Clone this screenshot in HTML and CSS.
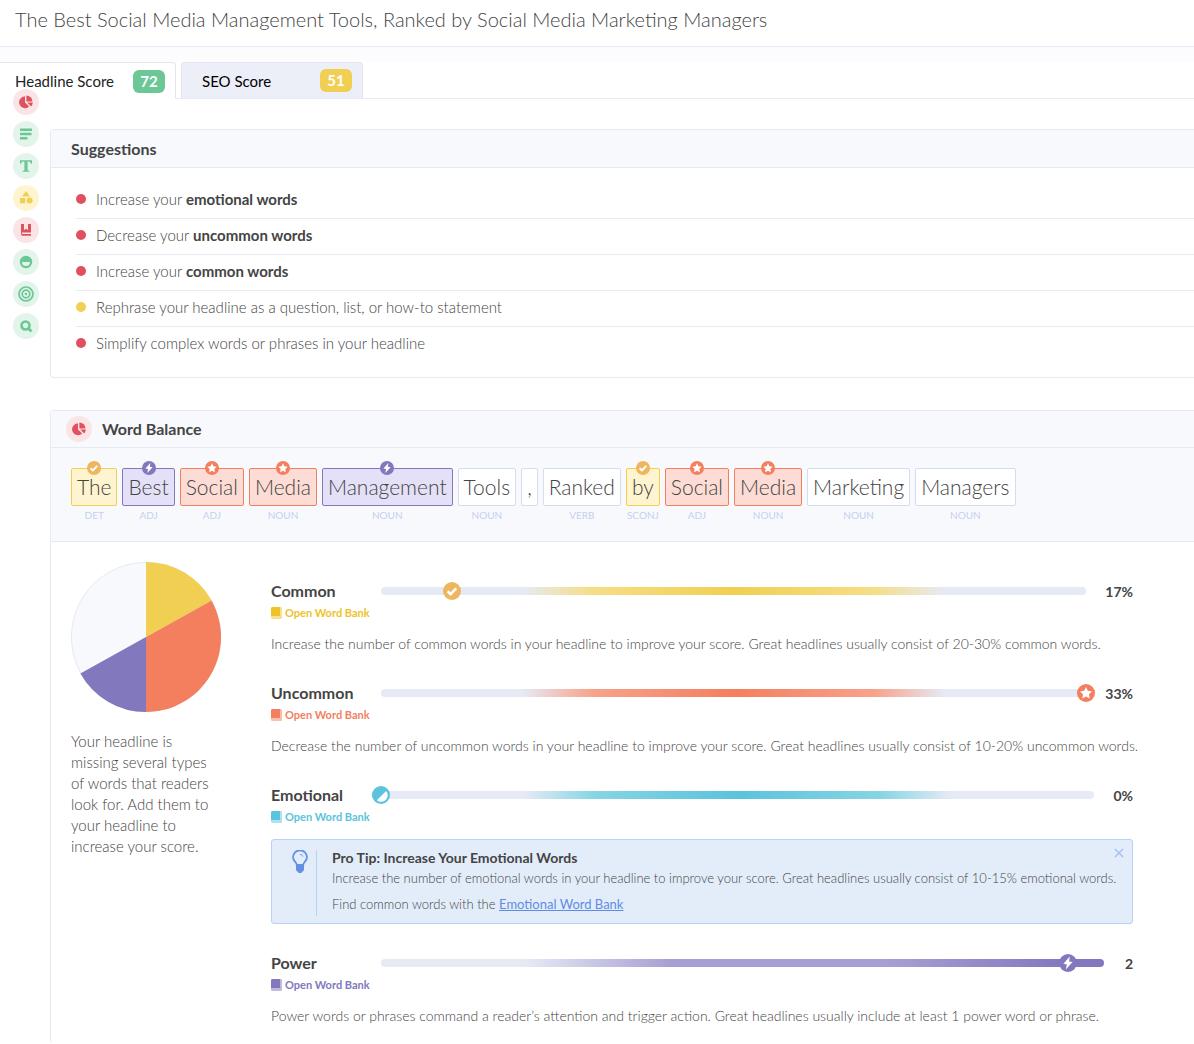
FILE: index.html
```
<!DOCTYPE html>
<html lang="en">
<head>
  <meta charset="UTF-8" />
  <meta name="viewport" content="width=device-width, initial-scale=1.0"/>
  <title>Headline Score</title>
  <link rel="stylesheet" href="styles.css">
</head>
<body>
  <!-- shared icons -->
  <svg class="sprite" aria-hidden="true">
    <symbol id="i-pie" viewBox="0 0 14 14">
      <path d="M6 1.2a6 6 0 1 0 4.2 10.4L6 7.4z"/>
      <path d="M7.4.4v6h6A6 6 0 0 0 7.4.4z"/>
      <path d="M8.2 7.6h5.6a6 6 0 0 1-1.7 3.8z"/>
    </symbol>
    <symbol id="i-check" viewBox="0 0 18 18">
      <circle cx="9" cy="9" r="9"/>
      <path d="M4.6 9.2l3 2.9 5.6-5.8" fill="none" stroke="#fff" stroke-width="2.6"/>
    </symbol>
    <symbol id="i-bolt" viewBox="0 0 18 18">
      <circle cx="9" cy="9" r="9"/>
      <path d="M10.8 2.6L4.4 9.8l3.4.6-1 5L13.6 8l-3.5-.5z" fill="#fff"/>
    </symbol>
    <symbol id="i-star" viewBox="0 0 18 18">
      <circle cx="9" cy="9" r="9"/>
      <path d="M9 3l1.8 3.8 4.2.6-3 2.9.7 4.2L9 12.5l-3.7 2 .7-4.2-3-2.9 4.2-.6z" fill="#fff"/>
    </symbol>
    <symbol id="i-half" viewBox="0 0 18 18">
      <circle cx="9" cy="9" r="9"/>
      <path d="M14.2 5a6.6 6.6 0 0 1-9.4 9.2z" fill="#fff"/>
    </symbol>
    <symbol id="i-book" viewBox="0 0 11 12">
      <path d="M1.500 0H10a1 1 0 0 1 1 1v10a1 1 0 0 1-1 1H1.500A1.500 1.500 0 0 1 0 10.500v-9A1.500 1.500 0 0 1 1.500 0z" opacity=".5"/>
      <path d="M1.500 0H9v9H0V1.500A1.500 1.500 0 0 1 1.500 0z"/>
    </symbol>
  </svg>

  <header class="page-title">
    <h1>The Best Social Media Management Tools, Ranked by Social Media Marketing Managers</h1>
  </header>

  <div class="tabs" role="tablist">
    <button class="tab active" role="tab" aria-selected="true">Headline Score <span class="score green">72</span></button>
    <button class="tab" role="tab" aria-selected="false">SEO Score <span class="score yellow">51</span></button>
  </div>

  <div class="layout">
    <nav class="side-nav">
      <a href="#balance" class="dot-icon red" aria-label="Word balance"><svg width="14" height="14"><use href="#i-pie"/></svg></a>
      <a href="#count" class="dot-icon green" aria-label="Word count">
        <svg width="14" height="14" viewBox="0 0 14 14"><path d="M1 1.500h12v2.500H1zM1 5.800h11.500v2.500H1zM1 10h7.500v2.500H1z"/></svg>
      </a>
      <a href="#type" class="dot-icon green" aria-label="Headline type">
        <svg width="14" height="14" viewBox="0 0 14 14"><path d="M1 1.200h12v3.600h-1.200c-.2-1.500-.8-2.200-2.300-2.200H8.600v8.200c0 .7.400 1 1.800 1v1H3.600v-1c1.400 0 1.800-.3 1.800-1V2.600h-.9C3 2.600 2.400 3.300 2.200 4.800H1z"/></svg>
      </a>
      <a href="#clarity" class="dot-icon yellow" aria-label="Clarity">
        <svg width="14" height="14" viewBox="0 0 14 14"><path d="M7 0l4 5.600H3zM1 7h5.200v5.200H1z"/><circle cx="10.600" cy="9.600" r="3"/></svg>
      </a>
      <a href="#reading" class="dot-icon red" aria-label="Reading level">
        <svg width="14" height="14" viewBox="0 0 14 14"><path d="M2 1h3v6l2-1.300L9 7V1h3v8.600H3.500a.7.7 0 0 0 0 1.400H12v1.800H3.500A1.900 1.900 0 0 1 2 11z"/></svg>
      </a>
      <a href="#sentiment" class="dot-icon green" aria-label="Sentiment">
        <svg width="14" height="14" viewBox="0 0 14 14"><path fill-rule="evenodd" d="M7 .8a6.200 6.200 0 1 0 0 12.400A6.200 6.200 0 0 0 7 .8zM3 7h8a4 4 0 0 1-8 0z"/></svg>
      </a>
      <a href="#skimmability" class="dot-icon green" aria-label="Skimmability">
        <svg width="16" height="16" viewBox="0 0 16 16" class="line"><circle cx="8" cy="8" r="7"/><circle cx="8" cy="8" r="3.800"/><circle cx="8" cy="8" r=".5"/></svg>
      </a>
      <a href="#preview" class="dot-icon green" aria-label="Search preview">
        <svg width="14" height="14" viewBox="0 0 14 14" class="line thick"><circle cx="6.500" cy="6.500" r="4"/><path d="M9 9l3.500 3.500"/></svg>
      </a>
    </nav>

    <main class="content">
      <section class="panel">
        <div class="panel-head"><h2>Suggestions</h2></div>
        <ul class="suggestions">
          <li class="bad">Increase your <b>emotional words</b></li>
          <li class="bad">Decrease your <b>uncommon words</b></li>
          <li class="bad">Increase your <b>common words</b></li>
          <li class="ok">Rephrase your headline as a question, list, or how-to statement</li>
          <li class="bad">Simplify complex words or phrases in your headline</li>
        </ul>
      </section>

      <section class="panel balance" id="balance">
        <div class="panel-head with-icon">
          <span class="dot-icon red"><svg width="14" height="14"><use href="#i-pie"/></svg></span>
          <h2>Word Balance</h2>
        </div>

        <div class="words">
          <div class="word common"><span>The</span><small>DET</small><svg class="pin"><use href="#i-check"/></svg></div>
          <div class="word power"><span>Best</span><small>ADJ</small><svg class="pin"><use href="#i-bolt"/></svg></div>
          <div class="word uncommon"><span>Social</span><small>ADJ</small><svg class="pin"><use href="#i-star"/></svg></div>
          <div class="word uncommon"><span>Media</span><small>NOUN</small><svg class="pin"><use href="#i-star"/></svg></div>
          <div class="word power"><span>Management</span><small>NOUN</small><svg class="pin"><use href="#i-bolt"/></svg></div>
          <div class="word"><span>Tools</span><small>NOUN</small></div>
          <div class="word"><span>,</span></div>
          <div class="word"><span>Ranked</span><small>VERB</small></div>
          <div class="word common"><span>by</span><small>SCONJ</small><svg class="pin"><use href="#i-check"/></svg></div>
          <div class="word uncommon"><span>Social</span><small>ADJ</small><svg class="pin"><use href="#i-star"/></svg></div>
          <div class="word uncommon"><span>Media</span><small>NOUN</small><svg class="pin"><use href="#i-star"/></svg></div>
          <div class="word"><span>Marketing</span><small>NOUN</small></div>
          <div class="word"><span>Managers</span><small>NOUN</small></div>
        </div>

        <div class="balance-body">
          <div class="summary">
            <svg class="pie" viewBox="0 0 150 150" role="img" aria-label="Word balance chart">
              <circle cx="75" cy="75" r="74.500" fill="#f8f9fd" stroke="#e6e9f4"/>
              <path d="M75 75V0a75 75 0 0 1 65.600 38.600z" fill="#f1cf53"/>
              <path d="M75 75l65.600-36.400A75 75 0 0 1 75 150z" fill="#f47f5e"/>
              <path d="M75 75v75a75 75 0 0 1-65.600-38.600z" fill="#8178be"/>
            </svg>
            <p>Your headline is missing several types of words that readers look for. Add them to your headline to increase your score.</p>
          </div>

          <div class="meters">
            <div class="meter common">
              <div class="meter-head">
                <h3>Common</h3>
                <div class="track"><svg class="marker" style="left: 10%"><use href="#i-check"/></svg></div>
                <strong>17%</strong>
              </div>
              <a href="#common-bank" class="bank"><svg width="11" height="12"><use href="#i-book"/></svg>Open Word Bank</a>
              <p>Increase the number of common words in your headline to improve your score. Great headlines usually consist of 20-30% common words.</p>
            </div>

            <div class="meter uncommon">
              <div class="meter-head">
                <h3>Uncommon</h3>
                <div class="track"><svg class="marker" style="left: 100%"><use href="#i-star"/></svg></div>
                <strong>33%</strong>
              </div>
              <a href="#uncommon-bank" class="bank"><svg width="11" height="12"><use href="#i-book"/></svg>Open Word Bank</a>
              <p>Decrease the number of uncommon words in your headline to improve your score. Great headlines usually consist of 10-20% uncommon words.</p>
            </div>

            <div class="meter emotional">
              <div class="meter-head">
                <h3>Emotional</h3>
                <div class="track"><svg class="marker" style="left: 0%"><use href="#i-half"/></svg></div>
                <strong>0%</strong>
              </div>
              <a href="#emotional-bank" class="bank"><svg width="11" height="12"><use href="#i-book"/></svg>Open Word Bank</a>
              <div class="tip">
                <div class="tip-icon">
                  <svg width="16" height="24" viewBox="0 0 16 24">
                    <path d="M4.800 15c0-3-3.800-4-3.800-7.700a7 7 0 0 1 14 0C15 11 11.200 12 11.200 15z" fill="none" stroke="#6490e4" stroke-width="1.800"/>
                    <path d="M8 4.500c1.600 0 2.600.8 3 2" fill="none" stroke="#6490e4"/>
                    <path d="M4 15h8v4.500c0 1-1 2-2 2.300L9.500 23h-3L6 21.800c-1-.3-2-1.300-2-2.300z" fill="#6490e4"/>
                  </svg>
                </div>
                <div class="tip-text">
                  <h4>Pro Tip: Increase Your Emotional Words</h4>
                  <p>Increase the number of emotional words in your headline to improve your score. Great headlines usually consist of 10-15% emotional words.</p>
                  <p>Find common words with the <a href="#emotional-bank">Emotional Word Bank</a></p>
                </div>
                <button class="close" aria-label="Close">
                  <svg width="10" height="10" viewBox="0 0 10 10"><path d="M1 1l8 8M9 1L1 9" stroke="#a5c0f2" stroke-width="1.500"/></svg>
                </button>
              </div>
            </div>

            <div class="meter power">
              <div class="meter-head">
                <h3>Power</h3>
                <div class="track"><svg class="marker" style="left: 95%"><use href="#i-bolt"/></svg></div>
                <strong>2</strong>
              </div>
              <a href="#power-bank" class="bank"><svg width="11" height="12"><use href="#i-book"/></svg>Open Word Bank</a>
              <p>Power words or phrases command a reader’s attention and trigger action. Great headlines usually include at least 1 power word or phrase.</p>
            </div>
          </div>
        </div>
      </section>
    </main>
  </div>
</body>
</html>
```
FILE: styles.css
```
* {
  margin: 0;
  padding: 0;
  box-sizing: border-box;
}

body {
  background-color: #fff;
  color: #444;
  font-family: Lato, "Liberation Sans", sans-serif;
  font-size: 15px;
  font-weight: 300;
  overflow-x: hidden;
}

svg {
  display: block;
  fill: currentColor;
}

.sprite {
  display: none;
}

.page-title {
  padding: 7px 15px 15px;
  border-bottom: 1px solid #e6eaf5;
}

.page-title h1 {
  font-size: 20px;
  font-weight: 300;
  line-height: 24px;
}

/* tabs */
.tabs {
  display: flex;
  gap: 5px;
  padding-top: 15px;
  background: linear-gradient(#fcfcff 15px, #fff 15px);
  border-bottom: 1px solid #e6eaf5;
}

.tab {
  display: flex;
  align-items: center;
  justify-content: space-between;
  width: 182px;
  height: 36px;
  padding: 0 10px 0 20px;
  border: 1px solid #e2e6f3;
  border-bottom: none;
  border-radius: 4px 4px 0 0;
  background-color: #eceef8;
  color: #000;
  font: 400 15px Lato, "Liberation Sans", sans-serif;
  cursor: pointer;
}

.tab.active {
  width: 176px;
  height: 37px;
  margin-bottom: -1px;
  padding-left: 15px;
  border-left: none;
  border-radius: 0 4px 0 0;
  background-color: #fff;
  color: #222;
}

.score {
  width: 32px;
  border-radius: 6px;
  color: #fff;
  font-size: 15px;
  font-weight: 700;
  line-height: 23px;
  text-align: center;
}

.score.green {
  background-color: #6bc795;
}

.score.yellow {
  background-color: #f1cf53;
}

.layout {
  display: flex;
}

/* left icons */
.side-nav {
  display: flex;
  flex-direction: column;
  gap: 6px;
  width: 50px;
  margin-top: -10px;
  padding-left: 13px;
  z-index: 1;
}

.dot-icon {
  display: flex;
  align-items: center;
  justify-content: center;
  width: 26px;
  height: 26px;
  border-radius: 50%;
}

.dot-icon.red {
  background-color: #fae4e6;
  color: #e0515f;
}

.dot-icon.green {
  background-color: #e3f4ea;
  color: #6bc795;
}

.dot-icon.yellow {
  background-color: #fff4d0;
  color: #f1cf53;
}

.line {
  fill: none;
  stroke: currentColor;
  stroke-width: 1.7;
}

.thick {
  stroke-width: 2.6;
}

.content {
  flex: 1;
  min-width: 0;
  padding-top: 30px;
}

/* panels */
.panel {
  margin-bottom: 32px;
  border: 1px solid #e6eaf5;
  border-right: none;
  border-radius: 4px 0 0 4px;
}

.panel-head {
  display: flex;
  align-items: center;
  gap: 10px;
  height: 38px;
  padding-left: 20px;
  border-bottom: 1px solid #e6eaf5;
  background-color: #f8f9fd;
}

.panel-head.with-icon {
  height: 37px;
  padding-left: 15px;
}

.panel-head h2 {
  font-size: 16px;
  font-weight: 700;
  line-height: 20px;
}

.suggestions {
  padding: 15px 0 14px 25px;
  list-style: none;
}

.suggestions li {
  display: flex;
  align-items: center;
  height: 36px;
  padding-bottom: 3px;
  border-bottom: 1px solid #e6eaf5;
  white-space: pre;
}

.suggestions li:last-child {
  border-bottom-color: transparent;
}

.suggestions li::before {
  content: '';
  width: 10px;
  height: 10px;
  margin-right: 10px;
  border-radius: 50%;
}

.suggestions b {
  font-weight: 700;
}

.bad::before {
  background-color: #e0515f;
}

.ok::before {
  background-color: #f1cf53;
}

.balance {
  margin-bottom: 0;
  border-bottom: none;
}

/* headline words */
.words {
  display: flex;
  gap: 5px;
  padding: 20px 20px 17px;
  border-bottom: 1px solid #e6eaf5;
  background-color: #f8f9fd;
}

.word {
  position: relative;
  display: flex;
  flex-direction: column;
  align-items: center;
}

.word span {
  padding: 0 5px;
  border: 1px solid #d5dcf0;
  border-radius: 2px;
  background-color: #fff;
  font-size: 21px;
  line-height: 36px;
}

.word small {
  width: 0;
  display: flex;
  justify-content: center;
  color: #c5d0ec;
  font-size: 10px;
  font-weight: 400;
  line-height: 18px;
}

.pin {
  position: absolute;
  top: -7px;
  width: 14px;
  height: 14px;
}

.word.common span {
  border-color: #f1cf53;
  background-color: #fff4d0;
}

.word.uncommon span {
  border-color: #f47f5e;
  background-color: #fddcd5;
}

.word.power span {
  border-color: #8178be;
  background-color: #e3e0f8;
}

.common .pin,
.common .marker {
  color: #edb65f;
}

.uncommon .pin,
.uncommon .marker {
  color: #f47f5e;
}

.power .pin,
.power .marker {
  color: #8178be;
}

.emotional .marker {
  color: #5bc3dc;
}

/* pie and meters */
.balance-body {
  display: grid;
  grid-template-columns: 150px minmax(0, 1fr);
  gap: 50px;
  padding: 20px 61px 17px 20px;
}

.pie {
  width: 150px;
  height: 150px;
}

.summary p {
  margin-top: 19px;
  padding-right: 8px;
  line-height: 21px;
}

.meters {
  display: flex;
  flex-direction: column;
  gap: 29px;
  padding-top: 19px;
}

.meter-head {
  display: flex;
  align-items: center;
  height: 20px;
}

.meter-head h3 {
  width: 110px;
  font-size: 16px;
  font-weight: 700;
  line-height: 20px;
}

.meter-head strong {
  min-width: 10px;
  margin-left: 19px;
  font-size: 14px;
  font-weight: 700;
  text-align: right;
}

.track {
  position: relative;
  flex: 1;
  height: 8px;
  border-radius: 4px;
}

.common .track {
  background: linear-gradient(90deg, #e6eaf5 20%, #f6de86 30%, #f1cf53 50%, #f6de86 70%, #e6eaf5 80%);
}

.uncommon .track {
  background: linear-gradient(90deg, #e6eaf5 20%, #f8a28b 30%, #f47f5e 50%, #f8a28b 70%, #e6eaf5 80%);
}

.emotional .track {
  background: linear-gradient(90deg, #e6eaf5 20%, #86d5e4 30%, #5bc3dc 50%, #86d5e4 70%, #e6eaf5 80%);
}

.power .track {
  background: linear-gradient(90deg, #e6eaf5 20%, #a79fd3 40%, #a79fd3 70%, #8178be 95%);
}

.marker {
  position: absolute;
  top: -5px;
  width: 18px;
  height: 18px;
  margin-left: -9px;
}

.bank {
  display: flex;
  align-items: center;
  gap: 3px;
  width: fit-content;
  font-size: 11px;
  font-weight: 700;
  line-height: 23px;
  text-decoration: none;
}

.common .bank {
  color: #efc228;
}

.uncommon .bank {
  color: #f47f5e;
}

.emotional .bank {
  color: #5bc3dc;
}

.power .bank {
  color: #8178be;
}

.meter > p {
  margin-top: 10px;
  font-size: 14px;
  line-height: 20px;
  white-space: nowrap;
}

/* pro tip */
.tip {
  position: relative;
  display: flex;
  margin-top: 11px;
  padding: 10px 15px 7px 20px;
  border: 1px solid #b9d1f6;
  border-radius: 3px;
  background-color: #e3edfa;
}

.tip-icon {
  width: 25px;
  margin-right: 15px;
  border-right: 1px solid #b9d1f6;
}

.tip-text h4 {
  font-size: 14px;
  font-weight: 700;
  line-height: 16px;
}

.tip-text p {
  font-size: 13px;
  line-height: 24px;
  white-space: nowrap;
}

.tip-text p:last-child {
  margin-top: 2px;
}

.tip-text a {
  color: #5f8ce3;
  font-weight: 400;
}

.close {
  position: absolute;
  top: 8px;
  right: 8px;
  border: none;
  background: none;
  cursor: pointer;
}
```
